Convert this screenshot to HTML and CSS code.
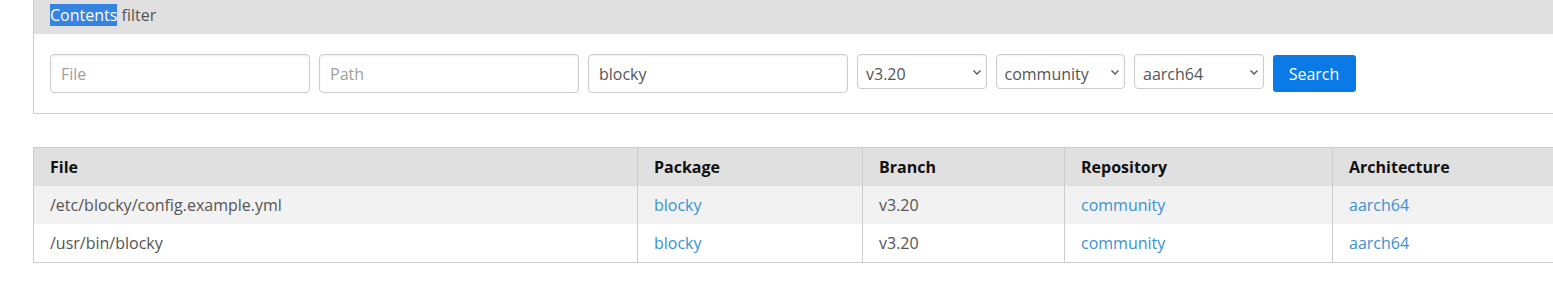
FILE: index.html
```html
<!DOCTYPE html>
<html lang="en">
<head>
  <meta charset="UTF-8">
  <meta name="viewport" content="width=device-width, initial-scale=1.0">
  <link rel="stylesheet" href="styles.css">
  <title>Contents filter</title>
</head>
<body>
  <main class="wrap">
    <section class="panel">
      <div class="panel-head"><span class="sel">Contents</span> filter</div>
      <form class="filter">
        <input type="text" class="field" placeholder="File">
        <input type="text" class="field" placeholder="Path">
        <input type="text" class="field" value="blocky">
        <span class="pick-wrap">
          <select class="pick">
            <option>v3.20</option>
          </select>
          <svg class="chev" width="8" height="5" viewBox="0 0 8 5"><path d="M0.5 0.5 L4 4 L7.5 0.5" fill="none" stroke="#555" stroke-width="1.3"/></svg>
        </span>
        <span class="pick-wrap">
          <select class="pick">
            <option>community</option>
          </select>
          <svg class="chev" width="8" height="5" viewBox="0 0 8 5"><path d="M0.5 0.5 L4 4 L7.5 0.5" fill="none" stroke="#555" stroke-width="1.3"/></svg>
        </span>
        <span class="pick-wrap">
          <select class="pick">
            <option>aarch64</option>
          </select>
          <svg class="chev" width="8" height="5" viewBox="0 0 8 5"><path d="M0.5 0.5 L4 4 L7.5 0.5" fill="none" stroke="#555" stroke-width="1.3"/></svg>
        </span>
        <button type="button" class="btn">Search</button>
      </form>
    </section>

    <table class="results">
      <colgroup>
        <col style="width: 604px">
        <col style="width: 225px">
        <col style="width: 202px">
        <col style="width: 268px">
        <col>
      </colgroup>
      <thead>
        <tr>
          <th>File</th>
          <th>Package</th>
          <th>Branch</th>
          <th>Repository</th>
          <th>Architecture</th>
        </tr>
      </thead>
      <tbody>
        <tr>
          <td>/etc/blocky/config.example.yml</td>
          <td><a href="#">blocky</a></td>
          <td>v3.20</td>
          <td><a href="#">community</a></td>
          <td><a href="#">aarch64</a></td>
        </tr>
        <tr>
          <td>/usr/bin/blocky</td>
          <td><a href="#">blocky</a></td>
          <td>v3.20</td>
          <td><a href="#">community</a></td>
          <td><a href="#">aarch64</a></td>
        </tr>
      </tbody>
    </table>
  </main>
</body>
</html>
```

FILE: styles.css
```css
body {
  margin: 0;
  font-family: "Open Sans", "Noto Sans", sans-serif;
  font-size: 16px;
  line-height: 22px;
  color: #555;
  background-color: #fff;
  overflow: hidden;
}

.wrap {
  width: 1540px;
  margin-left: 33px;
}

.panel {
  border: 1px solid #ccc;
  border-top: none;
}

.panel-head {
  background-color: #e0e0e0;
  padding: 4px 16px 8px;
  color: #555;
}

.sel {
  background-color: #3584e4;
  color: #fff;
}

.filter {
  display: flex;
  align-items: flex-start;
  gap: 9px;
  padding: 20px 16px;
}

.field {
  width: 260px;
  height: 39px;
  box-sizing: border-box;
  padding: 0 10px;
  border: 1px solid #ccc;
  border-radius: 4px;
  box-shadow: inset 0 1px 2px rgba(0, 0, 0, 0.06);
  font-family: inherit;
  font-size: 16px;
  color: #555;
}

.field::placeholder {
  color: #a0a0a0;
}

.pick-wrap {
  position: relative;
  display: block;
  height: 35px;
}

.pick {
  appearance: none;
  -webkit-appearance: none;
  display: block;
  width: 129.5px;
  height: 35px;
  box-sizing: border-box;
  padding: 5px 24px 0 8px;
  border: 1px solid #ccc;
  border-radius: 4px;
  background-color: #fff;
  box-shadow: inset 0 1px 2px rgba(0, 0, 0, 0.05);
  font-family: inherit;
  font-size: 16px;
  color: #555;
}

.chev {
  position: absolute;
  right: 6px;
  top: 16px;
  pointer-events: none;
}

.btn {
  margin-top: 1px;
  width: 83px;
  height: 37px;
  border: none;
  border-radius: 3px;
  background-color: #0a7be6;
  color: #fff;
  font-family: inherit;
  font-size: 16px;
  cursor: pointer;
}

.results {
  margin-top: 33px;
  width: 100%;
  table-layout: fixed;
  border-collapse: collapse;
  border: 1px solid #ccc;
}

.results th,
.results td {
  text-align: left;
  padding: 8px 16px;
  border-left: 1px solid #ccc;
  white-space: nowrap;
}

.results th {
  background-color: #e0e0e0;
  color: #111;
  font-weight: bold;
}

.results tbody tr:nth-child(odd) {
  background-color: #f2f2f2;
}

.results a {
  color: #3d91d1;
  text-decoration: none;
}
```
